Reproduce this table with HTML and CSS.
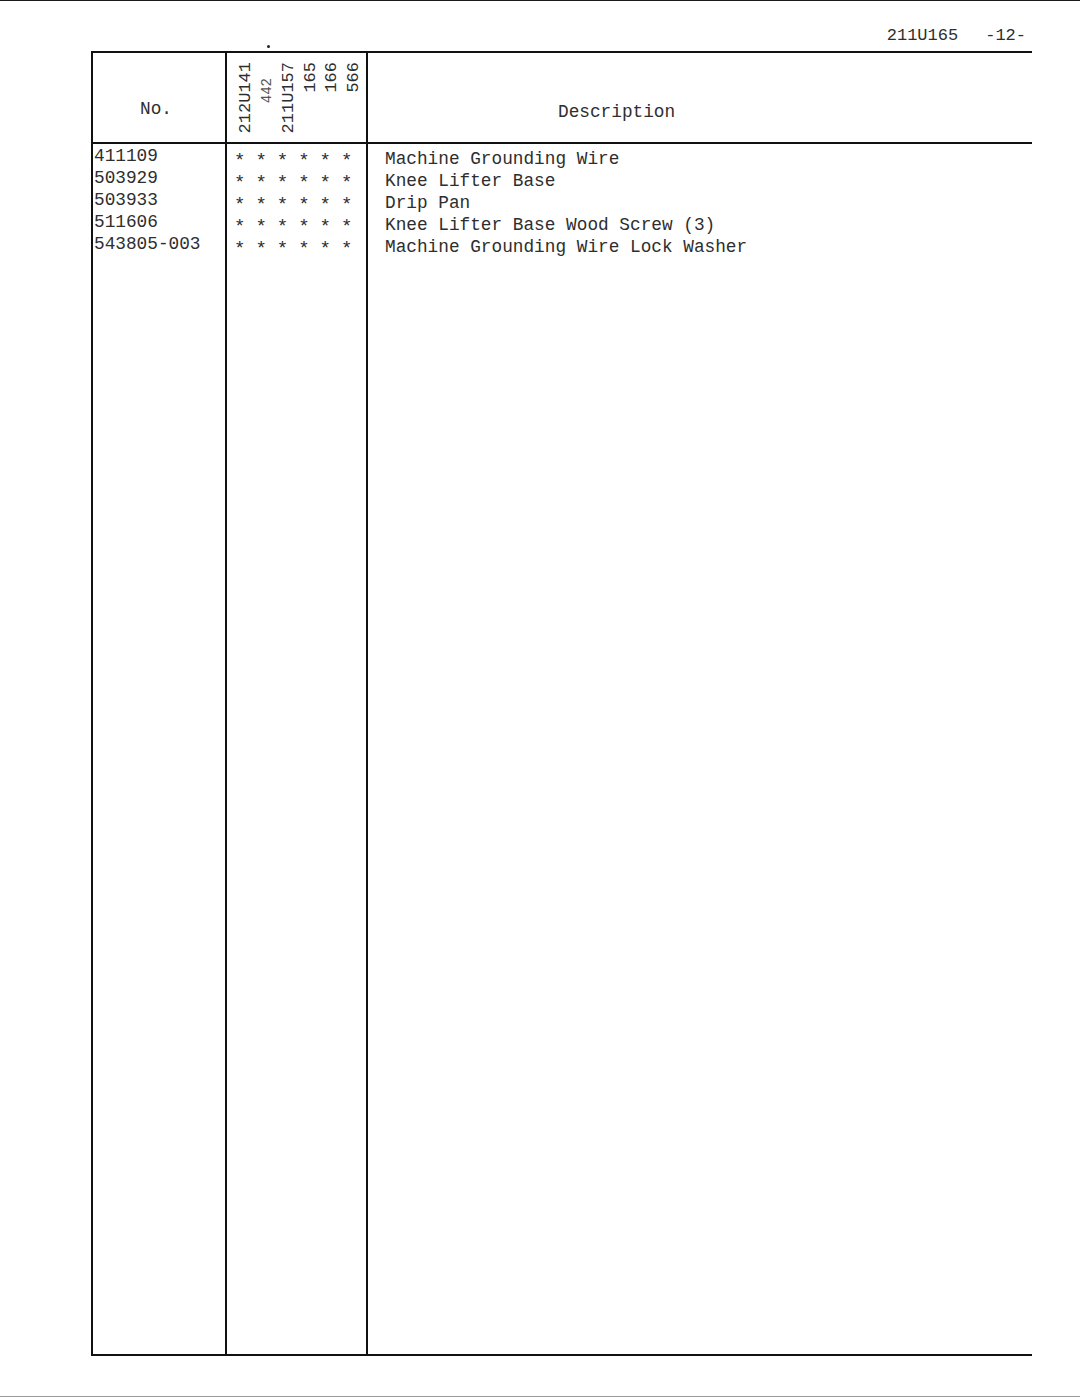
FILE: index.html
```html
<!DOCTYPE html>
<html lang="en">
<head>
<meta charset="utf-8">
<title>211U165 -12-</title>
<link rel="stylesheet" href="styles.css">
</head>
<body>
<div class="page">
  <header class="page-head">
    <span class="doc-id">211U165</span>
    <span class="page-no">-12-</span>
  </header>
  <section class="parts">
    <div class="row head-row">
      <div class="cell c-no"><span class="no-label">No.</span></div>
      <div class="cell c-models">
        <span class="mark"></span>
        <span class="model">212U141</span>
        <span class="model small">442</span>
        <span class="model">211U157</span>
        <span class="model">165</span>
        <span class="model">166</span>
        <span class="model">566</span>
      </div>
      <div class="cell c-desc"><span class="desc-label">Description</span></div>
    </div>
    <div class="row body-row">
      <div class="cell c-no list">
        <div>411109</div>
        <div>503929</div>
        <div>503933</div>
        <div>511606</div>
        <div>543805-003</div>
      </div>
      <div class="cell c-models list stars">
        <div>* * * * * *</div>
        <div>* * * * * *</div>
        <div>* * * * * *</div>
        <div>* * * * * *</div>
        <div>* * * * * *</div>
      </div>
      <div class="cell c-desc list descs">
        <div>Machine Grounding Wire</div>
        <div>Knee Lifter Base</div>
        <div>Drip Pan</div>
        <div>Knee Lifter Base Wood Screw (3)</div>
        <div>Machine Grounding Wire Lock Washer</div>
      </div>
    </div>
  </section>
  <div class="page-foot"></div>
</div>
</body>
</html>
```
FILE: styles.css
```css
* { box-sizing: border-box; }
html, body { margin: 0; padding: 0; background: #fff; }
body {
  font-family: "Liberation Mono", "DejaVu Sans Mono", monospace;
  color: #2e2e2e;
  width: 1080px;
  height: 1397px;
  overflow: hidden;
}
.page {
  border-top: 1px solid #1a1a1a;
  height: 1397px;
  display: flex;
  flex-direction: column;
}
.page-head {
  height: 50px;
  display: flex;
  justify-content: flex-end;
  gap: 27px;
  padding: 25px 54px 0 0;
  font-size: 17px;
  line-height: 20px;
}
.parts {
  margin-left: 91px;
  width: 941px;
  border-top: 2px solid #111;
  border-bottom: 2px solid #111;
  border-left: 2px solid #111;
  display: flex;
  flex-direction: column;
}
.row {
  display: grid;
  grid-template-columns: 134px 141px 1fr;
}
.head-row {
  height: 91px;
  border-bottom: 2px solid #111;
}
.body-row {
  height: 1210px;
}
.cell { min-width: 0; }
.c-no, .c-models { border-right: 2px solid #111; }
.no-label {
  display: block;
  padding: 45px 0 0 47px;
  font-size: 17.75px;
  line-height: 22px;
}
.desc-label {
  display: block;
  padding: 48px 0 0 190px;
  font-size: 17.75px;
  line-height: 22px;
}
.head-row .c-models {
  position: relative;
  display: flex;
  align-items: flex-start;
  padding: 9px 0 0 8px;
}
.model {
  writing-mode: vertical-rl;
  transform: rotate(180deg);
  font-family: "Liberation Mono", monospace;
  font-size: 17px;
  line-height: 21.5px;
  width: 21.5px;
}
.model.small {
  font-size: 14px;
  margin-top: 16px;
  color: #555;
}
.mark {
  position: absolute;
  left: 40px;
  top: -8px;
  width: 3px;
  height: 3px;
  border-radius: 50%;
  background: #222;
}
.list {
  font-size: 17.75px;
  line-height: 22px;
  white-space: nowrap;
}
.c-no.list { padding: 1px 0 0 1px; }
.stars {
  padding: 6px 0 0 7px;
  font-size: 19px;
  letter-spacing: -0.7px;
}
.descs { padding: 4px 0 0 17px; }
.page-foot {
  margin-top: auto;
  height: 1px;
  background: #9a9a9a;
}
```
